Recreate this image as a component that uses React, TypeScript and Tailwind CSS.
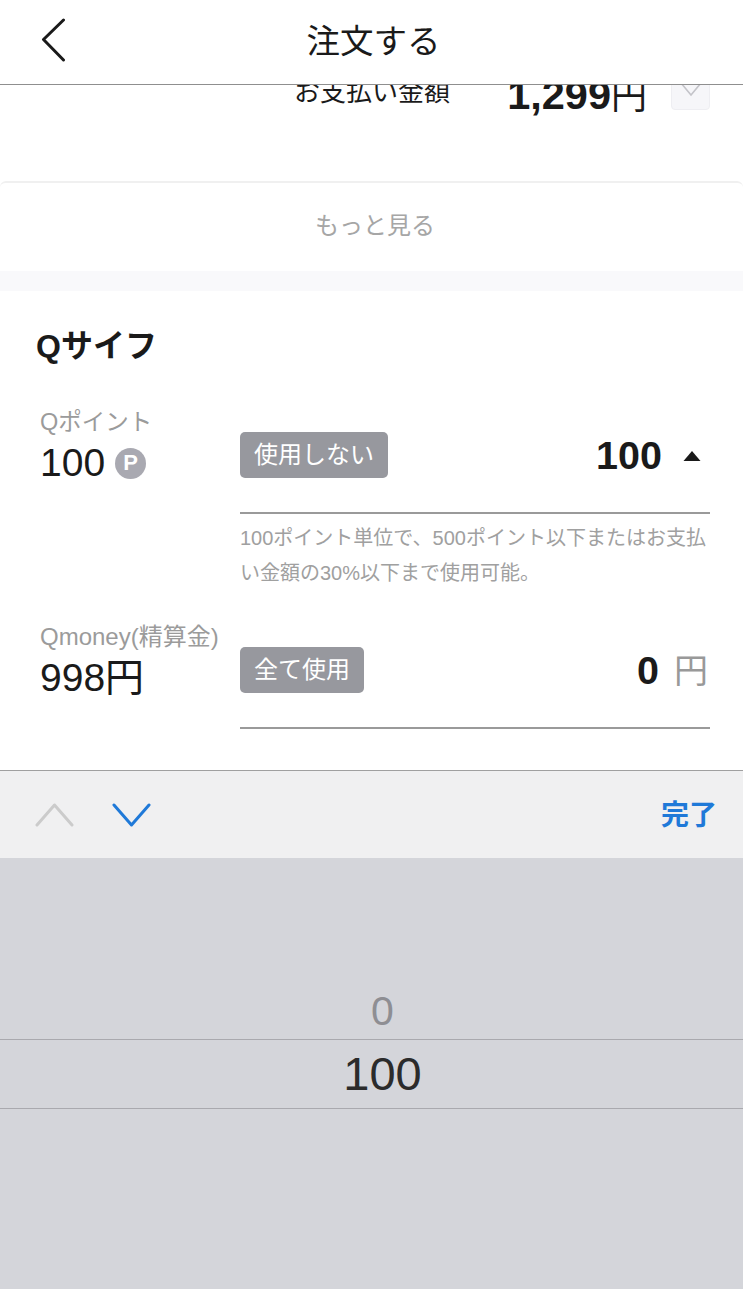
const font = "font-['Liberation_Sans','Noto_Sans_CJK_JP',sans-serif]"

function PointRow({
  label,
  labelClassName,
  value,
  badge,
  amount,
  children,
}: {
  label: string
  labelClassName: string
  value: React.ReactNode
  badge: string
  amount: React.ReactNode
  children?: React.ReactNode
}) {
  return (
    <div className="flex">
      <div className="w-[204px] shrink-0 pl-[4px]">
        <div className={`h-[30px] whitespace-nowrap leading-[30px] text-[#9b9b9b] ${labelClassName}`}>{label}</div>
        <div className="flex h-[52px] items-center gap-[10px] text-[39px] leading-[52px] text-[#1a1a1a]">
          {value}
        </div>
      </div>
      <div className="min-w-0 flex-1">
        <div className="flex h-[107px] items-center justify-between border-b-2 border-[#9a9a9a] pb-[14px] pt-[4px]">
          <span className="flex h-[46px] items-center rounded-[5px] bg-[#97989e] px-[14px] text-[24px] text-white">
            {badge}
          </span>
          {amount}
        </div>
        {children}
      </div>
    </div>
  )
}

export default function App() {
  return (
    <div className={`flex h-[1289px] flex-col overflow-hidden bg-white ${font}`}>
      <header className="relative flex h-[85px] shrink-0 items-center justify-center border-b border-[#8f8f8f] bg-white pl-[4px]">
        <svg className="absolute left-[40px] top-[18px]" width="28" height="44" viewBox="0 0 28 44" fill="none">
          <path d="M23.5 2 L3.5 21.5 L23.5 42" stroke="#1a1a1a" strokeWidth="3" strokeLinecap="round" strokeLinejoin="round" />
        </svg>
        <h1 className="text-[33.5px] font-normal text-[#1a1a1a]">注文する</h1>
      </header>

      <main className="h-[685px] shrink-0 overflow-hidden">
        <div className="-mt-[15px] flex h-[111px] items-start justify-end pr-[33px]">
          <span className="mr-[57px] mt-[3px] text-[26px] leading-[38px] text-[#1a1a1a]">お支払い金額</span>
          <span className="mr-[24px] flex items-baseline leading-[50px] text-[#1a1a1a]">
            <b className="text-[41.5px] font-bold">1,299</b>
            <span className="text-[36px]">円</span>
          </span>
          <span className="flex h-[40px] w-[39px] items-center justify-center rounded-[4px] border border-[#eeeef2] bg-[#f6f6f9]">
            <svg width="24" height="16" viewBox="0 0 24 16" fill="none" className="-mt-[2px]">
              <path d="M2 2 L12 14 L22 2" stroke="#c4c4c9" strokeWidth="1.6" />
            </svg>
          </span>
        </div>

        <div className="flex h-[90px] items-center justify-center rounded-t-[6px] border-t-2 border-[#f0f0f0] pb-[2px] pl-[7px] text-[24px] text-[#a6a6a6]">
          もっと見る
        </div>
        <div className="h-[20px] bg-[#f9f9fb]" />

        <section className="px-[36px] pr-[33px] pt-[31px]">
          <h2 className="text-[32px] font-bold leading-[48px] text-[#1a1a1a]">Qサイフ</h2>
          <div className="mt-[37px]">
            <PointRow
              label="Qポイント"
              labelClassName="text-[23.5px]"
              value={
                <>
                  100
                  <span className="flex size-[31px] items-center justify-center rounded-full bg-[#a9a9b1] text-[22px] font-bold text-white">
                    P
                  </span>
                </>
              }
              badge="使用しない"
              amount={
                <span className="flex items-center pr-[9px] pt-[3px]">
                  <b className="text-[39.5px] text-[#1a1a1a]">100</b>
                  <svg className="ml-[21px]" width="18" height="12" viewBox="0 0 18 12">
                    <path d="M9 1 L17.5 11 L0.5 11 Z" fill="#1a1a1a" />
                  </svg>
                </span>
              }
            >
              <p className="pt-[7px] text-[20px] leading-[35px] text-[#a0a0a0]">
                100ポイント単位で、500ポイント以下またはお支払い金額の30%以下まで使用可能。
              </p>
            </PointRow>
          </div>
          <div className="mt-[31px]">
            <PointRow
              label="Qmoney(精算金)"
              labelClassName="text-[24px]"
              value="998円"
              badge="全て使用"
              amount={
                <span className="flex items-center pr-[2px] pt-[3px]">
                  <b className="text-[39.5px] text-[#1a1a1a]">0</b>
                  <span className="ml-[15px] text-[34px] text-[#999999]">円</span>
                </span>
              }
            />
          </div>
        </section>
      </main>

      <div className="flex h-[88px] shrink-0 items-center justify-between border-t border-[#a0a0a0] bg-[#f0f0f1] pl-[35px] pr-[26px]">
        <div className="flex items-center gap-[38px]">
          <svg width="39" height="24" viewBox="0 0 39 24" fill="none">
            <path d="M2 22 L19.5 2 L37 22" stroke="#cbcbcb" strokeWidth="3" strokeLinecap="round" strokeLinejoin="round" />
          </svg>
          <svg width="39" height="24" viewBox="0 0 39 24" fill="none">
            <path d="M2 2 L19.5 22 L37 2" stroke="#1f79d8" strokeWidth="3" strokeLinecap="round" strokeLinejoin="round" />
          </svg>
        </div>
        <span className="pt-[3px] text-[28px] font-bold text-[#1f79d8]">完了</span>
      </div>

      <div className="flex-1 bg-[#d4d5da] pt-[131px]">
        <div className="flex h-[50px] items-center justify-center pb-[4px] pl-[22px] text-[41px] text-[#8e8e93]">0</div>
        <div className="flex h-[70px] items-center justify-center border-y border-[#a9a9ae] pl-[22px] text-[47px] text-[#2b2b2b]">
          100
        </div>
      </div>
    </div>
  )
}
